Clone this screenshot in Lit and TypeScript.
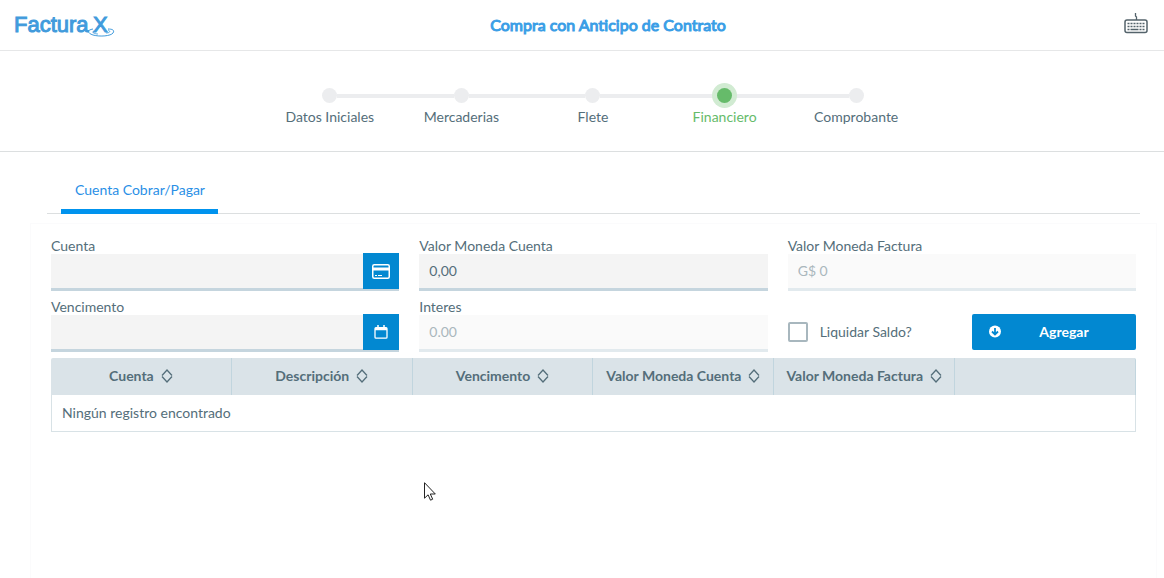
import { LitElement, html, svg, css } from "lit";
import { customElement, state } from "lit/decorators.js";
import { classMap } from "lit/directives/class-map.js";

const STEPS = ["Datos Iniciales", "Mercaderias", "Flete", "Financiero", "Comprobante"];
const COLUMNS = ["Cuenta", "Descripción", "Vencimento", "Valor Moneda Cuenta", "Valor Moneda Factura"];

const sortIcon = html`<svg class="sort" viewBox="0 0 12 14" aria-hidden="true">
  <path d="M1 6.5 L6 1 L11 6.5 M1 7.5 L6 13 L11 7.5" />
</svg>`;

const keyboardKeys = [0, 1, 2].map((row) =>
  row < 2
    ? svg`<path d="M3.5 ${10.5 + row * 3}h17" stroke-width="1.5" stroke-dasharray="2 1" />`
    : svg`<path d="M3.5 16.5h2M6.5 16.5h8M15.5 16.5h2M18.5 16.5h2" stroke-width="1.5" />`
);

@customElement("app-root")
export class AppRoot extends LitElement {
  @state() private activeStep = 3;

  static styles = css`
    :host {
      display: block;
      min-height: 100vh;
      box-sizing: border-box;
      background: #fff;
      color: #546e7a;
      font: 14px/16px Lato, "Open Sans", sans-serif;
      overflow: hidden;
    }
    * { box-sizing: border-box; }
    button, input { font: inherit; color: inherit; margin: 0; border: 0; border-radius: 0; }
    button { cursor: pointer; padding: 0; }

    header {
      display: grid;
      grid-template-columns: 1fr auto 1fr;
      align-items: center;
      height: 51px;
      padding: 0 16px 0 14px;
      border-bottom: 1px solid #e6e7e8;
    }
    .brand { display: block; width: 101px; height: 26px; color: #419bdc; }
    .brand svg { display: block; width: 100%; height: 100%; overflow: visible; }
    .brand text {
      font: 400 22px "Liberation Sans", Arial, sans-serif;
      fill: currentColor;
      stroke: currentColor;
      stroke-width: 1px;
    }
    h1 {
      margin: 0;
      padding-left: 54px;
      color: #3a9ee6;
      font-size: 16px;
      line-height: 24px;
      font-weight: 400;
      -webkit-text-stroke: 1px #3a9ee6;
    }
    .keyboard { justify-self: end; width: 24px; height: 24px; background: none; color: #54636b; }
    .keyboard svg { display: block; }

    .steps {
      display: flex;
      justify-content: center;
      height: 101px;
      padding: 32px 0 0 22px;
      border-bottom: 1px solid #dcdfe0;
    }
    ol {
      display: grid;
      grid-template-columns: repeat(5, 1fr);
      width: 60%;
      max-width: 658px;
      margin: 0;
      padding: 0;
      list-style: none;
    }
    li {
      display: grid;
      grid-template-columns: 1fr 15px 1fr;
      grid-template-rows: 25px 18px;
      align-items: center;
      text-align: center;
    }
    li::before, li::after { content: ""; height: 4px; background: #ecedef; }
    li::before { order: 1; }
    .dot { order: 2; width: 15px; height: 15px; border-radius: 50%; background: #ecedef; }
    li::after { order: 3; }
    li:first-child::before, li:last-child::after { background: none; }
    .name { order: 4; grid-column: 1 / -1; white-space: nowrap; }
    .active .dot { background: #66bb6a; box-shadow: 0 0 0 5px #d1ebd2; z-index: 1; }
    .active .name { color: #66bb6a; }

    nav {
      display: flex;
      margin: 24px 24px 9px 47px;
      padding-left: 14px;
      border-bottom: 1px solid #dcdfe0;
    }
    .tab {
      height: 38px;
      margin-bottom: -1px;
      padding: 0 13px 6px 14px;
      border-bottom: 5px solid #0093ee;
      color: #2a8fe6;
      text-decoration: none;
      line-height: 27px;
    }
    .panel {
      min-height: 355px;
      margin: 0 7px 0 30px;
      padding: 14px 20px;
      border: 1px solid #fbfbfc;
      border-bottom: 0;
    }
    form {
      display: grid;
      grid-template-columns: repeat(3, 1fr);
      gap: 8px 20px;
    }
    .field { display: flex; flex-direction: column; min-width: 0; }
    .field > label { height: 16px; line-height: 16px; }
    .row { display: flex; height: 37px; border-bottom: 3px solid #c5d5de; background: #f4f4f4; }
    .row input { flex: 1; min-width: 0; padding: 0 10px; background: none; outline: 0; }
    .off .row { background: #fafafa; border-color: #e2eaee; }
    .off input { color: #aab7bd; }
    .row button {
      display: grid;
      place-items: center;
      width: 36px;
      height: 36px;
      margin-top: -1px;
      background: #0288d1;
      color: #fff;
    }
    .actions {
      display: flex;
      align-items: flex-end;
      justify-content: space-between;
      padding-bottom: 2px;
    }
    .check { display: flex; align-items: center; gap: 12px; height: 36px; }
    .check input {
      appearance: none;
      width: 20px;
      height: 20px;
      border: 2px solid #a8b7be;
      border-radius: 2px;
      background: #fff;
    }
    .add {
      display: flex;
      align-items: center;
      width: 164px;
      height: 36px;
      padding: 0 10px 0 16px;
      border-radius: 2px;
      background: #0288d1;
      color: #fff;
    }
    .add span { flex: 1; text-align: center; font-weight: 700; }
    table {
      width: 100%;
      margin-top: 6px;
      border-collapse: separate;
      border-spacing: 0;
      table-layout: fixed;
    }
    th {
      height: 37px;
      padding: 0 0 2px;
      border-right: 1px solid #c1d5de;
      background: #dae3e8;
      font-weight: 700;
      white-space: nowrap;
    }
    th:first-child { border-top-left-radius: 2px; }
    th:last-child { border-top-right-radius: 2px; }
    .heading { display: inline-flex; align-items: center; gap: 7px; }
    .sort { width: 12px; height: 14px; fill: none; stroke: #546e7a; stroke-width: 1.3; }
    td {
      height: 37px;
      padding: 0 10px;
      border: 1px solid #d8e2e6;
      border-top: 0;
    }
    .pointer { position: absolute; left: 424px; top: 482px; width: 13px; height: 20px; pointer-events: none; }
  `;

  render() {
    return html`
      <header>
        <a class="brand" href="#" aria-label="Factura X">
          <svg viewBox="0 0 101 26">
            <text x="0" y="20">Factura</text>
            <text x="79" y="20">X</text>
            <g fill="none" stroke="currentColor">
              <path d="M79 17c-6 1-6 4 0 6 7 2 18 1 20-2 2-3-1-4-5-4" />
              <path d="M80 19c-3 1 0 3 4 3M92 21c4 0 5-2 2-3" stroke-width=".8" />
            </g>
          </svg>
        </a>
        <h1>Compra con Anticipo de Contrato</h1>
        <button class="keyboard" type="button" aria-label="Teclado">
          <svg width="24" height="24" viewBox="0 0 24 24" fill="none" stroke="currentColor">
            <rect x="1" y="7" width="22" height="12.5" rx="2" stroke-width="1.5" />
            <path d="M12.500 7V4l-1-1V0" stroke-width="1.3" />
            ${keyboardKeys}
          </svg>
        </button>
      </header>

      <section class="steps">
        <ol>
          ${STEPS.map(
            (name, i) => html`<li class=${classMap({ active: i === this.activeStep })}>
              <span class="dot"></span><span class="name">${name}</span>
            </li>`
          )}
        </ol>
      </section>

      <nav><a class="tab" href="#panel">Cuenta Cobrar/Pagar</a></nav>

      <main class="panel" id="panel">
        <form @submit=${(e: Event) => e.preventDefault()}>
          <div class="field">
            <label for="cuenta">Cuenta</label>
            <div class="row">
              <input id="cuenta" type="text" />
              <button type="button" aria-label="Buscar cuenta">
                <svg width="18" height="15" viewBox="0 0 18 15" fill="none" stroke="currentColor">
                  <rect x=".75" y=".75" width="16.5" height="13.5" rx="1.5" stroke-width="1.5" />
                  <path d="M1 5h16" stroke-width="3" />
                  <path d="M3 11.5h2M6 11.5h4" />
                </svg>
              </button>
            </div>
          </div>
          <div class="field">
            <label for="valor">Valor Moneda Cuenta</label>
            <div class="row"><input id="valor" type="text" value="0,00" /></div>
          </div>
          <div class="field off">
            <label for="factura">Valor Moneda Factura</label>
            <div class="row"><input id="factura" type="text" value="G$ 0" disabled /></div>
          </div>
          <div class="field">
            <label for="vence">Vencimento</label>
            <div class="row">
              <input id="vence" type="text" />
              <button type="button" aria-label="Abrir calendario">
                <svg width="14" height="14" viewBox="0 0 14 14" fill="none" stroke="currentColor">
                  <rect x="1" y="2.7" width="12" height="10.5" rx="1" stroke-width="1.3" />
                  <path d="M1 4h12" stroke-width="2.5" />
                  <path d="M4 0v3M10 0v3" stroke-width="1.5" />
                </svg>
              </button>
            </div>
          </div>
          <div class="field off">
            <label for="interes">Interes</label>
            <div class="row"><input id="interes" type="text" value="0.00" disabled /></div>
          </div>
          <div class="actions">
            <label class="check"><input type="checkbox" />Liquidar Saldo?</label>
            <button class="add" type="button">
              <svg width="14" height="14" viewBox="0 0 14 14" aria-hidden="true">
                <circle cx="7" cy="6.500" r="6" fill="#fff" />
                <path d="M7 3v6M4 6.500l3 3 3-3" fill="none" stroke="#0288d1" stroke-width="1.8" />
              </svg>
              <span>Agregar</span>
            </button>
          </div>
        </form>

        <table>
          <thead>
            <tr>
              ${COLUMNS.map((c) => html`<th scope="col"><span class="heading">${c}${sortIcon}</span></th>`)}
              <th scope="col" aria-label="Acciones"></th>
            </tr>
          </thead>
          <tbody>
            <tr><td colspan="6">Ningún registro encontrado</td></tr>
          </tbody>
        </table>
      </main>

      <svg class="pointer" viewBox="0 0 13 20" aria-hidden="true">
        <path d="M.5 .7v15.500l3.600-3.400 2.400 5.400 2.200-1-2.400-5.200h5z" fill="#fff" stroke="#222" />
      </svg>
    `;
  }
}
